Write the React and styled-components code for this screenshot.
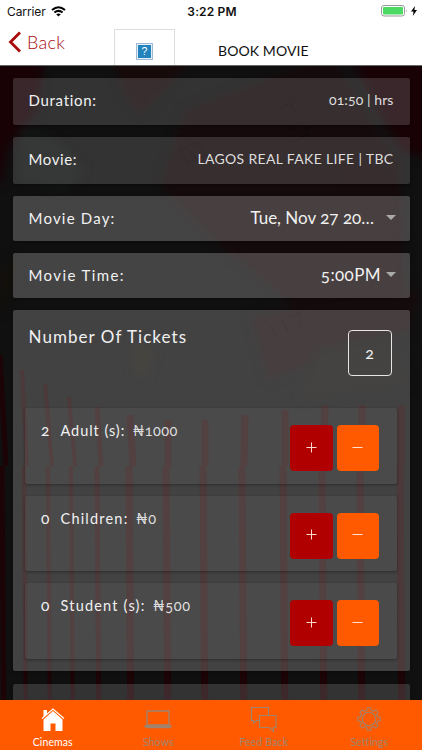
import React from 'react'
import styled, { createGlobalStyle, css } from 'styled-components'

const GlobalStyle = createGlobalStyle`
  * {
    box-sizing: border-box;
  }

  body {
    margin: 0;
    overflow: hidden;
    font-family: Lato, "Liberation Sans", sans-serif;
    font-variant-numeric: oldstyle-nums;
  }
`

const Screen = styled.div`
  position: relative;
  width: 422px;
  height: 750px;
  overflow: hidden;
  display: flex;
  flex-direction: column;
  background: #0f0f10;
  color: #f1f1f1;
`

const Backdrop = styled.svg`
  position: absolute;
  top: 65px;
  left: 0;
`

const Header = styled.header`
  position: relative;
  flex: none;
  height: 66px;
  background: #fff;
  color: #111;
  border-bottom: 1px solid #666;
`

const StatusBar = styled.div`
  display: grid;
  grid-template-columns: 1fr auto 1fr;
  align-items: center;
  height: 22px;
  padding: 0 5px 0 7px;
  font-family: Inter, sans-serif;
  font-variant-numeric: normal;
  font-size: 12px;
`

const StatusSide = styled.div`
  display: flex;
  align-items: center;
  gap: ${({ end }) => (end ? '3px' : '5px')};
  justify-content: ${({ end }) => (end ? 'flex-end' : 'flex-start')};
  letter-spacing: -0.1px;
`

const Clock = styled.span`
  font-weight: 600;
  letter-spacing: 0.15px;
`

const NavBar = styled.div`
  display: flex;
  height: 43px;
`

const BackButton = styled.button`
  display: flex;
  align-items: flex-start;
  width: 114px;
  padding: 9px 0 0 8px;
  border: 0;
  background: none;
  color: #a90a0a;
  font: 300 18px/23px Lato, sans-serif;
  letter-spacing: 0.3px;
  text-align: left;

  svg {
    margin-right: 5px;
  }
`

const Thumb = styled.div`
  display: flex;
  justify-content: center;
  width: 61px;
  height: 36px;
  margin-top: 7px;
  padding-top: 13px;
  border: 1px solid #ddd;
  border-bottom: 0;
`

const Title = styled.h1`
  margin: 20px 0 0 43px;
  font-size: 14px;
  font-weight: 400;
  line-height: 18px;
  letter-spacing: 0.1px;
`

const Content = styled.main`
  position: relative;
  flex: 1;
  min-height: 0;
  overflow: hidden;
  display: flex;
  flex-direction: column;
  gap: 12.5px;
  padding: 12px 12.5px 0;
`

const Card = styled.section`
  flex: none;
  border-radius: 2px;
  background: rgba(255, 255, 255, ${({ tint }) => tint});
  box-shadow: 0 1px 3px rgba(0, 0, 0, 0.35);
`

const FieldCard = styled(Card)`
  display: flex;
  align-items: center;
  justify-content: space-between;
  height: ${({ select }) => (select ? '44.6px' : '46.5px')};
  padding: ${({ select }) => (select ? '0 13.5px 0 16px' : '0 16px 2px')};
`

const Text = styled.span`
  font-size: ${({ size }) => size || 15}px;
  line-height: 20px;
  letter-spacing: ${({ spacing }) => spacing || 0}px;
  white-space: nowrap;
  ${({ light }) => light && css`
    color: #dedede;
  `}
`

const SelectValue = styled.div`
  display: flex;
  align-items: center;
  gap: ${({ gap }) => gap}px;
`

const Caret = styled.i`
  margin-top: -2px;
  border: 5px solid transparent;
  border-top: 5px solid #aaa;
  border-bottom: 0;
`

const TicketsCard = styled(Card)`
  height: 361px;
`

const TicketsHead = styled.div`
  display: flex;
  align-items: flex-start;
  justify-content: space-between;
  height: 98px;
  padding: 20px 18px 0 16px;

  > span {
    margin-top: -3px;
  }
`

const Total = styled.div`
  display: flex;
  align-items: center;
  justify-content: center;
  width: 44px;
  height: 46px;
  border: 1px solid #e6e6e6;
  border-radius: 4px;
`

const TicketList = styled.div`
  display: flex;
  flex-direction: column;
  gap: 12px;
  padding: 0 12.5px;
`

const TicketRow = styled(Card)`
  display: flex;
  justify-content: space-between;
  height: 75.5px;
  padding: 17px 18px 0 16px;
`

const TicketLabel = styled.div`
  display: grid;
  grid-template-columns: 19.5px auto auto;
  align-items: baseline;
  margin-top: -5px;
  height: 20px;
`

const Price = styled(Text)`
  margin-left: 7.5px;
`

const Stepper = styled.div`
  display: flex;
  gap: 4px;
`

const StepButton = styled.button`
  display: flex;
  align-items: center;
  justify-content: center;
  width: 42.5px;
  height: 46px;
  padding: 0 0 2px;
  border: 0;
  border-radius: 4px;
  background: ${({ minus }) => (minus ? '#ff5a00' : '#b00000')};
`

const TabBar = styled.nav`
  position: relative;
  flex: none;
  display: grid;
  grid-template-columns: repeat(4, 1fr);
  height: 50.5px;
  background: #ff5a00;
`

const Tab = styled.a`
  display: flex;
  flex-direction: column;
  align-items: center;
  padding-top: 5px;
  color: ${({ active }) => (active ? '#fff' : '#9d8570')};
  font-size: 10.5px;
  line-height: 14px;
  letter-spacing: ${({ spacing }) => spacing || 0}px;

  svg {
    margin-bottom: 2px;
  }
`

const tickets = [
  { label: 'Adult (s):', count: 2, price: '₦1000', spacing: 0.95, priceSpacing: 0.4 },
  { label: 'Children:', count: 0, price: '₦0', spacing: 1.2, priceSpacing: 0.8 },
  { label: 'Student (s):', count: 0, price: '₦500', spacing: 1.2, priceSpacing: 0.7 },
]

// [x at the top, x at the seam, x at the bottom, first y, width]
const stripes = [
  [0, 6, 4, 290, 5],
  [22, 27, 26, 305, 4],
  [45, 52, 50, 319, 4],
  [69, 75, 73, 332, 4],
  [97, 101, 99, 342, 5],
  [130, 133, 131, 350, 7],
  [168, 168, 168, 355, 7],
  [205, 205, 205, 355, 7],
  [245, 244, 244, 350, 7],
  [285, 285, 285, 345, 7],
  [325, 324, 324, 340, 7],
  [362, 362, 362, 340, 7],
  [401, 401, 402, 340, 7],
]

const PopcornBackdrop = () => (
  <Backdrop width="422" height="685" viewBox="0 0 422 685">
    <defs>
      <filter id="soft" x="-20%" y="-20%" width="140%" height="140%" colorInterpolationFilters="sRGB">
        <feGaussianBlur stdDeviation="5" />
      </filter>
    </defs>
    <rect width="422" height="685" fill="#101011" />
    <g filter="url(#soft)">
      <path d="M-10-10H45L38 45 10 80 0 120H-10Z" fill="#180206" />
      <path d="M110-10H195L165 25 140 50 125 30Z" fill="#170a0b" />
      <path d="M350-10H432V95L400 85 375 40Z" fill="#180206" />
      <path d="M185 45 330-10 400 100 405 225 330 270 220 180 160 120Z" fill="#150a0b" />
      <path d="M340 90 400 110V240L350 230Z" fill="#14090b" />
      <path d="M250 250 420 225 410 265 268 315Z" fill="#160b0c" />
      <path d="M20 60 55 75 85 105 65 125 20 115Z" fill="#131514" />
      <path d="M132 275 155 285 145 315 133 305Z" fill="#16130c" />
      <path d="M0 210 14 190 16 220 0 250Z" fill="#13100b" />
      <path d="M315 285 390 270 410 320 300 335Z" fill="#12110f" />
    </g>
    <g fill="none" stroke="#0b090a" strokeWidth="1.2" opacity=".6">
      <path d="M180 85 196 77 206 90 189 99ZM188 84 197 94M278 45 290 38 296 48M286 66 302 57 308 69 294 77" />
      <path d="M270 260 277 273M282 255 288 267M290 252 300 248 300 265" />
    </g>
    {stripes.map(([top, seam, bottom, y, width]) => (
      <path
        key={bottom}
        d={`M${top - width / 2} ${y}h${width}L${seam + width / 2} 401h${-width}ZM${bottom - width / 2 - 2} 401h${width}L${bottom + width / 2} 685h${-width}Z`}
        fill="#1c0406"
      />
    ))}
  </Backdrop>
)

const Plus = () => (
  <svg width="11" height="11" viewBox="0 0 11 11" stroke="#ffd8d0">
    <path d="M5.5 .5v10M.5 5.5h10" />
  </svg>
)

const Minus = () => (
  <svg width="11" height="11" viewBox="0 0 11 11" stroke="#ffe0d0">
    <path d="M.5 5.5h10" />
  </svg>
)

const App = () => (
  <>
    <GlobalStyle />
    <Screen>
      <PopcornBackdrop />
      <Header>
        <StatusBar>
          <StatusSide>
            Carrier
            <svg width="15" height="11" viewBox="0 0 15 11" fill="none" stroke="#000" strokeWidth="2">
              <path d="M1 4.1Q7.5-1.6 14 4.1M3.4 6.6Q7.5 3.2 11.6 6.6" />
              <path d="M7.5 10.6 5.2 8.3Q7.5 6.6 9.8 8.3Z" fill="#000" stroke="none" />
            </svg>
          </StatusSide>
          <Clock>3:22 PM</Clock>
          <StatusSide end>
            <svg width="27" height="12" viewBox="0 0 27 12">
              <rect x=".5" y=".5" width="23" height="10.5" rx="2.5" fill="none" stroke="#999" />
              <rect x="2" y="2" width="20" height="7.5" rx="1" fill="#4cd964" />
              <path d="M25 4q1.5 1.8 0 3.6Z" fill="#999" />
            </svg>
            <svg width="6" height="10" viewBox="0 0 6 10">
              <path d="M4 0 0 5.6H2.6L1.8 10 6 4H3.4Z" />
            </svg>
          </StatusSide>
        </StatusBar>
        <NavBar>
          <BackButton>
            <svg width="14" height="22" viewBox="0 0 14 22" fill="none" stroke="#a90a0a" strokeWidth="2.8">
              <path d="M12 1.5 2.5 11 12 20.5" />
            </svg>
            Back
          </BackButton>
          <Thumb>
            <svg width="17" height="17" viewBox="0 0 17 17">
              <rect x=".5" y=".5" width="16" height="16" fill="#e4effa" stroke="#9fb8d4" />
              <rect x="2" y="2" width="13" height="13" fill="#2384bd" />
              <text x="8.5" y="12.2" textAnchor="middle" fill="#fff" fontFamily="Liberation Sans" fontSize="10.5">?</text>
            </svg>
          </Thumb>
          <Title>BOOK MOVIE</Title>
        </NavBar>
      </Header>
      <Content>
        <FieldCard tint={0.15}>
          <Text spacing={0.7}>Duration:</Text>
          <Text size={14} spacing={0.1} light>01:50 | hrs</Text>
        </FieldCard>
        <FieldCard tint={0.15}>
          <Text spacing={0.6}>Movie:</Text>
          <Text size={14} spacing={0.34} light>LAGOS REAL FAKE LIFE | TBC</Text>
        </FieldCard>
        <FieldCard select tint={0.22}>
          <Text spacing={1.2}>Movie Day:</Text>
          <SelectValue gap={12}>
            <Text size={17}>Tue, Nov 27 20…</Text>
            <Caret />
          </SelectValue>
        </FieldCard>
        <FieldCard select tint={0.22}>
          <Text spacing={1.4}>Movie Time:</Text>
          <SelectValue gap={5}>
            <Text size={17} spacing={0.4}>5:00PM</Text>
            <Caret />
          </SelectValue>
        </FieldCard>
        <TicketsCard tint={0.21}>
          <TicketsHead>
            <Text size={17} spacing={1.05}>Number Of Tickets</Text>
            <Total><Text size={16}>2</Text></Total>
          </TicketsHead>
          <TicketList>
            {tickets.map(({ label, count, price, spacing, priceSpacing }) => (
              <TicketRow key={label} tint={0.045}>
                <TicketLabel>
                  <Text size={15.5}>{count}</Text>
                  <Text size={14.5} spacing={spacing}>{label}</Text>
                  <Price size={14.5} spacing={priceSpacing} light>{price}</Price>
                </TicketLabel>
                <Stepper>
                  <StepButton aria-label="Add"><Plus /></StepButton>
                  <StepButton minus aria-label="Remove"><Minus /></StepButton>
                </Stepper>
              </TicketRow>
            ))}
          </TicketList>
        </TicketsCard>
        <FieldCard tint={0.15} />
      </Content>
      <TabBar>
        <Tab active spacing={0.1}>
          <svg width="24" height="28" viewBox="0 0 24 28" fill="#fff">
            <path d="M2.5 5H6v4L2.5 12ZM12 6 2.5 14.5V26H9.5V18.5h5V26h7V14.5Z" />
            <path d="M1 13.5 12 4 23 13.5" fill="none" stroke="#fff" strokeWidth="1.2" />
          </svg>
          Cinemas
        </Tab>
        <Tab spacing={0.2}>
          <svg width="28" height="28" viewBox="0 0 28 28" fill="none" stroke="#9d8570" strokeWidth="1.3">
            <path d="M3 6H25V20H3Z" />
            <path d="M.5 20.5H27.5V21.5L26 23H2L.5 21.5Z" fill="#9d8570" strokeWidth=".5" />
          </svg>
          Shows
        </Tab>
        <Tab spacing={0.2}>
          <svg width="28" height="28" viewBox="0 0 28 28" fill="none" stroke="#9d8570" strokeWidth="1.1">
            <path d="M9.5 15.5H6.5L3.5 18V15.5H1.5V2.5H18.5V10" />
            <path d="M9.5 10.5H26V22.5H23.5V26.5L19.5 22.5H9.5Z" />
          </svg>
          Feed Back
        </Tab>
        <Tab spacing={0.1}>
          <svg width="24" height="28" viewBox="0 0 24 28" fill="none" stroke="#9d8570" strokeWidth="1.1">
            <circle cx="12" cy="14" r="6.7" />
            <path d="M9.7 5.5 10.3 2.8H13.7L14.3 5.5 16.5 6.4 18.8 4.9 21.1 7.2 19.6 9.5 20.5 11.7 23.2 12.3V15.7L20.5 16.3 19.6 18.5 21.1 20.8 18.8 23.1 16.5 21.6 14.3 22.5 13.7 25.2H10.3L9.7 22.5 7.5 21.6 5.2 23.1 2.9 20.8 4.4 18.5 3.5 16.3 .8 15.7V12.3L3.5 11.7 4.4 9.5 2.9 7.2 5.2 4.9 7.5 6.4Z" />
          </svg>
          Settings
        </Tab>
      </TabBar>
    </Screen>
  </>
)

export default App
